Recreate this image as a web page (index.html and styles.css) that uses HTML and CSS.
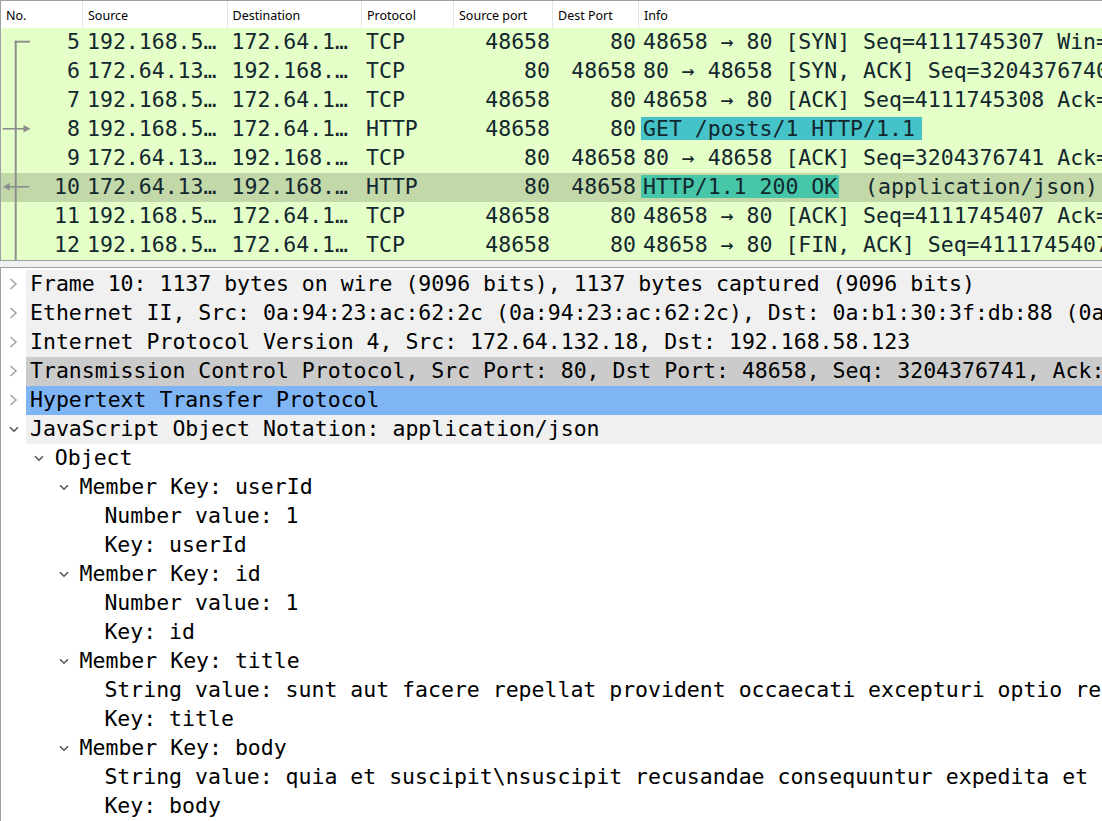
FILE: index.html
```html
<!DOCTYPE html>
<html lang="en">
<head>
    <meta charset="UTF-8">
    <title>Packet capture</title>
    <link rel="stylesheet" href="styles.css">
</head>
<body>
    <div class="packet-list">
        <div class="cols plist-head">
            <div class="hcell">No.</div>
            <div class="hcell">Source</div>
            <div class="hcell">Destination</div>
            <div class="hcell">Protocol</div>
            <div class="hcell">Source port</div>
            <div class="hcell">Dest Port</div>
            <div class="hcell last">Info</div>
        </div>

        <div class="cols prow">
            <div class="cell c-no">
                <svg class="conv" viewBox="0 0 32 29"><rect x="13.7" y="12.7" width="2" height="16.3"/><rect x="13.7" y="12.7" width="15.3" height="2"/></svg>
                <span>5</span>
            </div>
            <div class="cell">192.168.5…</div>
            <div class="cell">172.64.1…</div>
            <div class="cell">TCP</div>
            <div class="cell num">48658</div>
            <div class="cell num">80</div>
            <div class="cell info">48658 → 80 [SYN] Seq=4111745307 Win=64240 Len=0 MSS=1460 SACK_PERM</div>
        </div>
        <div class="cols prow">
            <div class="cell c-no">
                <svg class="conv" viewBox="0 0 32 29"><rect x="13.7" y="0" width="2" height="29"/></svg>
                <span>6</span>
            </div>
            <div class="cell">172.64.13…</div>
            <div class="cell">192.168.…</div>
            <div class="cell">TCP</div>
            <div class="cell num">80</div>
            <div class="cell num">48658</div>
            <div class="cell info">80 → 48658 [SYN, ACK] Seq=3204376740 Ack=4111745308 Win=65535 Len=0</div>
        </div>
        <div class="cols prow">
            <div class="cell c-no">
                <svg class="conv" viewBox="0 0 32 29"><rect x="13.7" y="0" width="2" height="29"/></svg>
                <span>7</span>
            </div>
            <div class="cell">192.168.5…</div>
            <div class="cell">172.64.1…</div>
            <div class="cell">TCP</div>
            <div class="cell num">48658</div>
            <div class="cell num">80</div>
            <div class="cell info">48658 → 80 [ACK] Seq=4111745308 Ack=3204376741 Win=64256 Len=0</div>
        </div>
        <div class="cols prow">
            <div class="cell c-no">
                <svg class="conv" viewBox="0 0 32 29"><rect x="13.7" y="0" width="2" height="29"/><rect x="1.7" y="13" width="24" height="1.6"/><polygon points="22.5,10 29.5,13.8 22.5,17.6"/></svg>
                <span>8</span>
            </div>
            <div class="cell">192.168.5…</div>
            <div class="cell">172.64.1…</div>
            <div class="cell">HTTP</div>
            <div class="cell num">48658</div>
            <div class="cell num">80</div>
            <div class="cell info"><span class="hl hl-req">GET /posts/1 HTTP/1.1</span></div>
        </div>
        <div class="cols prow">
            <div class="cell c-no">
                <svg class="conv" viewBox="0 0 32 29"><rect x="13.7" y="0" width="2" height="29"/></svg>
                <span>9</span>
            </div>
            <div class="cell">172.64.13…</div>
            <div class="cell">192.168.…</div>
            <div class="cell">TCP</div>
            <div class="cell num">80</div>
            <div class="cell num">48658</div>
            <div class="cell info">80 → 48658 [ACK] Seq=3204376741 Ack=4111745407 Win=65535 Len=0</div>
        </div>
        <div class="cols prow selected">
            <div class="cell c-no">
                <svg class="conv" viewBox="0 0 32 29"><rect x="13.7" y="0" width="2" height="29"/><rect x="6" y="13" width="22" height="1.6"/><polygon points="1.7,13.8 8.7,10 8.7,17.6"/></svg>
                <span>10</span>
            </div>
            <div class="cell">172.64.13…</div>
            <div class="cell">192.168.…</div>
            <div class="cell">HTTP</div>
            <div class="cell num">80</div>
            <div class="cell num">48658</div>
            <div class="cell info"><span class="hl hl-resp">HTTP/1.1 200 OK</span>  (application/json)</div>
        </div>
        <div class="cols prow">
            <div class="cell c-no">
                <svg class="conv" viewBox="0 0 32 29"><rect x="13.7" y="0" width="2" height="29"/></svg>
                <span>11</span>
            </div>
            <div class="cell">192.168.5…</div>
            <div class="cell">172.64.1…</div>
            <div class="cell">TCP</div>
            <div class="cell num">48658</div>
            <div class="cell num">80</div>
            <div class="cell info">48658 → 80 [ACK] Seq=4111745407 Ack=3204377824 Win=64128 Len=0</div>
        </div>
        <div class="cols prow">
            <div class="cell c-no">
                <svg class="conv" viewBox="0 0 32 29"><rect x="13.7" y="0" width="2" height="29"/></svg>
                <span>12</span>
            </div>
            <div class="cell">192.168.5…</div>
            <div class="cell">172.64.1…</div>
            <div class="cell">TCP</div>
            <div class="cell num">48658</div>
            <div class="cell num">80</div>
            <div class="cell info">48658 → 80 [FIN, ACK] Seq=4111745407 Ack=3204377824 Win=64128 Len=0</div>
        </div>
    </div>

    <div class="splitter"></div>

    <div class="details">
        <div class="node top">
            <span class="exp"><svg class="chev-closed" viewBox="0 0 9 12"><polyline points="1.5,1 7,6 1.5,11"/></svg></span>
            <span class="label">Frame 10: 1137 bytes on wire (9096 bits), 1137 bytes captured (9096 bits)</span>
        </div>
        <div class="node top">
            <span class="exp"><svg class="chev-closed" viewBox="0 0 9 12"><polyline points="1.5,1 7,6 1.5,11"/></svg></span>
            <span class="label">Ethernet II, Src: 0a:94:23:ac:62:2c (0a:94:23:ac:62:2c), Dst: 0a:b1:30:3f:db:88 (0a:b1:30:3f:db:88)</span>
        </div>
        <div class="node top">
            <span class="exp"><svg class="chev-closed" viewBox="0 0 9 12"><polyline points="1.5,1 7,6 1.5,11"/></svg></span>
            <span class="label">Internet Protocol Version 4, Src: 172.64.132.18, Dst: 192.168.58.123</span>
        </div>
        <div class="node top hover">
            <span class="exp"><svg class="chev-closed" viewBox="0 0 9 12"><polyline points="1.5,1 7,6 1.5,11"/></svg></span>
            <span class="label">Transmission Control Protocol, Src Port: 80, Dst Port: 48658, Seq: 3204376741, Ack: 4111745407, Len: 1083</span>
        </div>
        <div class="node top sel">
            <span class="exp"><svg class="chev-closed" viewBox="0 0 9 12"><polyline points="1.5,1 7,6 1.5,11"/></svg></span>
            <span class="label">Hypertext Transfer Protocol</span>
        </div>
        <div class="node top">
            <span class="exp"><svg class="chev-open" viewBox="0 0 10 7"><polyline points="1,1.2 5,5.2 9,1.2"/></svg></span>
            <span class="label">JavaScript Object Notation: application/json</span>
        </div>
        <div class="node l1">
            <span class="exp"><svg class="chev-open" viewBox="0 0 10 7"><polyline points="1,1.2 5,5.2 9,1.2"/></svg></span>
            <span class="label">Object</span>
        </div>
        <div class="node l2">
            <span class="exp"><svg class="chev-open" viewBox="0 0 10 7"><polyline points="1,1.2 5,5.2 9,1.2"/></svg></span>
            <span class="label">Member Key: userId</span>
        </div>
        <div class="node l3"><span class="exp"></span><span class="label">Number value: 1</span></div>
        <div class="node l3"><span class="exp"></span><span class="label">Key: userId</span></div>
        <div class="node l2">
            <span class="exp"><svg class="chev-open" viewBox="0 0 10 7"><polyline points="1,1.2 5,5.2 9,1.2"/></svg></span>
            <span class="label">Member Key: id</span>
        </div>
        <div class="node l3"><span class="exp"></span><span class="label">Number value: 1</span></div>
        <div class="node l3"><span class="exp"></span><span class="label">Key: id</span></div>
        <div class="node l2">
            <span class="exp"><svg class="chev-open" viewBox="0 0 10 7"><polyline points="1,1.2 5,5.2 9,1.2"/></svg></span>
            <span class="label">Member Key: title</span>
        </div>
        <div class="node l3"><span class="exp"></span><span class="label">String value: sunt aut facere repellat provident occaecati excepturi optio reprehenderit</span></div>
        <div class="node l3"><span class="exp"></span><span class="label">Key: title</span></div>
        <div class="node l2">
            <span class="exp"><svg class="chev-open" viewBox="0 0 10 7"><polyline points="1,1.2 5,5.2 9,1.2"/></svg></span>
            <span class="label">Member Key: body</span>
        </div>
        <div class="node l3"><span class="exp"></span><span class="label">String value: quia et suscipit\nsuscipit recusandae consequuntur expedita et cum\nreprehenderit molestiae ut ut quas totam</span></div>
        <div class="node l3"><span class="exp"></span><span class="label">Key: body</span></div>
    </div>
</body>
</html>
```

FILE: styles.css
```css
body {
    margin: 0;
    width: 1102px;
    height: 821px;
    overflow: hidden;
    background: #ffffff;
    font-family: "DejaVu Sans Mono", monospace;
    font-size: 21.5px;
    color: #000000;
}

/* packet list */

.packet-list {
    border: 1px solid #a0a0a0;
    border-right: none;
}

.cols {
    display: grid;
    grid-template-columns: 82px 144.5px 134.5px 92px 99px 86px 1fr;
}

.plist-head {
    height: 27px;
    background: #ffffff;
    font-family: "Noto Sans", sans-serif;
    font-size: 12.5px;
    color: #000000;
}

.hcell {
    border-right: 1px solid #e5e5e5;
    padding-left: 5px;
    line-height: 29px;
    white-space: nowrap;
    overflow: hidden;
}

.hcell.last {
    border-right: none;
}

.prow {
    height: 29px;
    background: #e4ffc7;
    color: #12272e;
    white-space: nowrap;
}

.prow.selected {
    background: #c3d8a8;
}

.cell {
    box-sizing: border-box;
    height: 29px;
    line-height: 27px;
    padding: 0 3px 2px 4px;
    overflow: hidden;
    min-width: 0;
}

.num {
    text-align: right;
}

.c-no {
    display: flex;
    justify-content: space-between;
    padding-left: 0;
    padding-bottom: 0;
}

.c-no span {
    line-height: 27px;
}

.conv {
    width: 32px;
    height: 29px;
    flex: none;
    fill: #8e8e8e;
}

.info {
    display: flex;
    align-items: center;
    padding-right: 0;
    white-space: pre;
}

.hl {
    display: inline-block;
    height: 23px;
    line-height: 23px;
    margin-left: -2px;
    padding-left: 2px;
}

.hl-req {
    background: #46c3c8;
    padding-right: 7px;
}

.hl-resp {
    background: #47c7a7;
    padding-right: 2px;
}

.splitter {
    height: 6px;
    background: #f0f0f0;
}

/* packet details */

.details {
    border-top: 1px solid #a0a0a0;
    border-left: 1px solid #a0a0a0;
    padding-top: 2px;
    white-space: nowrap;
    overflow: hidden;
}

.node {
    display: flex;
    height: 29px;
}

.exp {
    width: 25px;
    flex: none;
    display: flex;
    align-items: center;
    padding-left: 8px;
    box-sizing: border-box;
}

.label {
    flex: 1;
    line-height: 27px;
    padding-left: 4px;
    overflow: hidden;
}

.node.top .label {
    background: #f0f0f0;
}

.node.hover .label {
    background: #cbcbcb;
}

.node.sel .label {
    background: #7fb5f5;
}

.l1 { padding-left: 24.8px; }
.l2 { padding-left: 49.6px; }
.l3 { padding-left: 74.4px; }

.chev-closed {
    width: 9px;
    height: 12px;
    margin-top: -2px;
    fill: none;
    stroke: #a3a3a3;
    stroke-width: 1.5;
}

.chev-open {
    width: 10px;
    height: 7px;
    fill: none;
    stroke: #555555;
    stroke-width: 1.6;
}
```
